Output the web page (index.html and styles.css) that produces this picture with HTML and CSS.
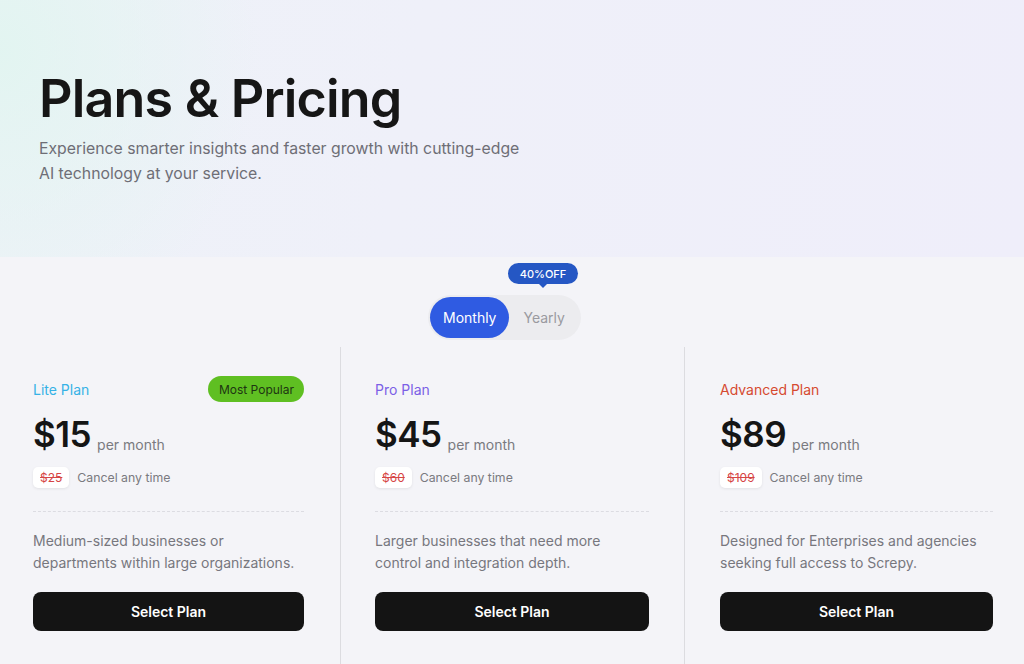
FILE: index.html
```html
<!DOCTYPE html>
<html lang="en">
<head>
<meta charset="utf-8">
<title>Plans &amp; Pricing</title>
<link rel="stylesheet" href="styles.css">
</head>
<body>
  <header class="hero">
    <h1 class="hero-title">Plans &amp; Pricing</h1>
    <p class="hero-sub">Experience smarter insights and faster growth with cutting-edge<br>AI technology at your service.</p>
  </header>

  <main class="pricing">
    <div class="toggle-wrap">
      <div class="toggle">
        <span class="discount">40%OFF</span>
        <button class="toggle-btn active">Monthly</button>
        <button class="toggle-btn">Yearly</button>
      </div>
    </div>

    <section class="plans">
      <article class="plan">
        <div class="plan-head">
          <span class="plan-name lite">Lite Plan</span>
          <span class="popular">Most Popular</span>
        </div>
        <div class="price-row"><span class="price">$15</span><span class="per">per month</span></div>
        <div class="old-row"><span class="old">$25</span><span class="cancel">Cancel any time</span></div>
        <hr class="dash">
        <p class="desc">Medium-sized businesses or departments within large organizations.</p>
        <button class="select">Select Plan</button>
      </article>

      <article class="plan">
        <div class="plan-head">
          <span class="plan-name pro">Pro Plan</span>
        </div>
        <div class="price-row"><span class="price">$45</span><span class="per">per month</span></div>
        <div class="old-row"><span class="old">$60</span><span class="cancel">Cancel any time</span></div>
        <hr class="dash">
        <p class="desc">Larger businesses that need more control and integration depth.</p>
        <button class="select">Select Plan</button>
      </article>

      <article class="plan">
        <div class="plan-head">
          <span class="plan-name adv">Advanced Plan</span>
        </div>
        <div class="price-row"><span class="price">$89</span><span class="per">per month</span></div>
        <div class="old-row"><span class="old">$109</span><span class="cancel">Cancel any time</span></div>
        <hr class="dash">
        <p class="desc">Designed for Enterprises and agencies seeking full access to Screpy.</p>
        <button class="select">Select Plan</button>
      </article>
    </section>
  </main>
</body>
</html>
```

FILE: styles.css
```css
* { box-sizing: border-box; }

html, body {
  margin: 0;
  height: 100%;
}

body {
  font-family: Inter, "Noto Sans", sans-serif;
  background: #f4f4f8;
  color: #141414;
  overflow: hidden;
}

.hero {
  height: 257px;
  padding: 68px 0 0 39px;
  background:
    radial-gradient(ellipse 260px 300px at 0% 20%, rgba(225, 245, 240, 0.9), rgba(225, 245, 240, 0) 100%),
    linear-gradient(100deg, #eef2f8 0%, #eff0f9 40%, #efeefa 100%);
}

.hero-title {
  margin: 0;
  font-size: 52px;
  line-height: 62px;
  font-weight: 560;
  letter-spacing: -0.8px;
  color: #161616;
}

.hero-sub {
  margin: 6px 0 0;
  font-size: 15.8px;
  line-height: 25px;
  color: #6e6e76;
}

.pricing {
  height: calc(100% - 257px);
  display: flex;
  flex-direction: column;
}

.toggle-wrap {
  display: flex;
  justify-content: center;
  padding-top: 38px;
  padding-right: 15px;
}

.toggle {
  position: relative;
  display: flex;
  align-items: center;
  width: 153px;
  height: 45px;
  padding: 2px;
  border-radius: 23px;
  background: #ececef;
}

.toggle-btn {
  border: 0;
  background: transparent;
  font-family: inherit;
  font-size: 14px;
  color: #9a9aa0;
  height: 41px;
  border-radius: 21px;
  padding: 0;
  width: 70px;
}

.toggle-btn.active {
  width: 80px;
  background: #2f5be2;
  color: #ffffff;
}

.discount {
  position: absolute;
  left: 80px;
  top: -32px;
  width: 70px;
  height: 21px;
  border-radius: 11px;
  background: #2557c4;
  color: #fff;
  font-size: 11px;
  font-weight: 500;
  display: flex;
  align-items: center;
  justify-content: center;
}

.discount::after {
  content: "";
  position: absolute;
  left: 50%;
  bottom: -4px;
  margin-left: -4px;
  border-left: 4px solid transparent;
  border-right: 4px solid transparent;
  border-top: 4px solid #2557c4;
}

.plans {
  flex: 1;
  margin-top: 7px;
  display: grid;
  grid-template-columns: 340px 344px 340px;
}

.plan {
  padding: 29px 35px 0 34px;
  border-left: 1px solid #dcdce0;
}

.plan:first-child {
  border-left: 0;
  padding-left: 33px;
  padding-right: 36px;
}

.plan:last-child {
  padding-left: 35px;
  padding-right: 31px;
}

.plan-head {
  height: 26px;
  display: flex;
  align-items: center;
  justify-content: space-between;
}

.plan-name {
  font-size: 14px;
}

.plan-name.lite { color: #36b2e6; }
.plan-name.pro { color: #7b5fe6; }
.plan-name.adv { color: #d64a30; }

.popular {
  height: 26px;
  padding: 0 10px 0 11px;
  border-radius: 13px;
  background: #5fbf22;
  color: #1e3512;
  font-size: 12px;
  display: flex;
  align-items: center;
}

.price-row {
  margin-top: 12px;
  display: flex;
  align-items: baseline;
  gap: 6px;
  height: 40px;
}

.price {
  font-size: 35px;
  line-height: 40px;
  font-weight: 600;
  letter-spacing: -0.5px;
  color: #151515;
}

.per {
  font-size: 14px;
  color: #7a7a80;
  position: relative;
  top: 3px;
}

.old-row {
  margin-top: 13px;
  display: flex;
  align-items: center;
  gap: 8px;
}

.old {
  height: 21px;
  padding: 0 7px;
  background: #ffffff;
  border-radius: 5px;
  box-shadow: 0 1px 3px rgba(0, 0, 0, 0.08);
  color: #d64545;
  font-size: 12px;
  text-decoration: line-through;
  display: flex;
  align-items: center;
}

.cancel {
  font-size: 12.3px;
  color: #7a7a80;
}

.dash {
  margin: 23px 0 0;
  border: 0;
  border-top: 1px dashed #dcdce2;
}

.desc {
  margin: 18px 0 0;
  font-size: 14px;
  line-height: 22px;
  color: #77777e;
}

.select {
  margin-top: 18px;
  width: 100%;
  height: 39px;
  border: 0;
  border-radius: 8px;
  background: #141414;
  color: #ffffff;
  font-family: inherit;
  font-size: 14px;
  font-weight: 600;
}
```
